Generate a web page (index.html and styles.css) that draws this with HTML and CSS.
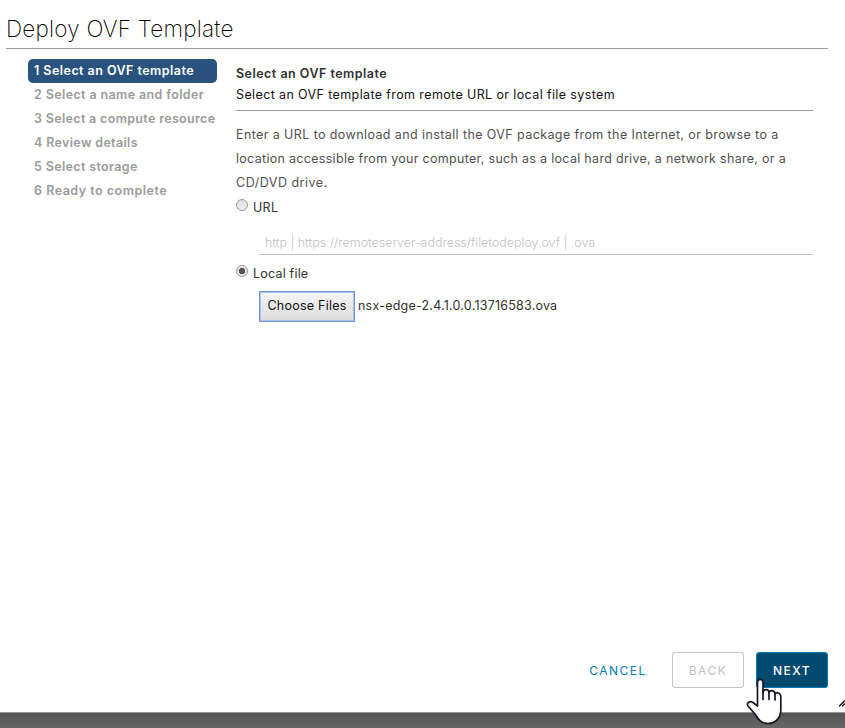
FILE: index.html
```html
<!DOCTYPE html>
<html lang="en">
<head>
<meta charset="utf-8">
<title>Deploy OVF Template</title>
<link rel="stylesheet" href="styles.css">
</head>
<body>
<div class="dialog">
  <header class="dialog-header"><h1 class="title"><span>Deploy OVF Template</span></h1></header>
  <div class="dialog-body">
    <ol class="steps">
      <li class="step active"><span class="s1">1 Select an OVF template</span></li>
      <li class="step"><span class="s2">2 Select a name and folder</span></li>
      <li class="step"><span class="s3">3 Select a compute resource</span></li>
      <li class="step"><span class="s4">4 Review details</span></li>
      <li class="step"><span class="s5">5 Select storage</span></li>
      <li class="step"><span class="s6">6 Ready to complete</span></li>
    </ol>
    <main class="page">
      <div class="page-header">
        <h2 class="page-title">Select an OVF template</h2>
        <p class="page-sub">Select an OVF template from remote URL or local file system</p>
      </div>
      <p class="intro"><span class="i1">Enter a URL to download and install the OVF package from the Internet, or browse to a</span><br><span class="i2">location accessible from your computer, such as a local hard drive, a network share, or a</span><br><span class="i3">CD/DVD drive.</span></p>
      <div class="option"><span class="radio"></span><span class="url-label">URL</span></div>
      <div class="url-field"><span>http | https://remoteserver-address/filetodeploy.ovf | .ova</span></div>
      <div class="option"><span class="radio checked"></span><span class="local-label">Local file</span></div>
      <div class="file-row"><button class="choose">Choose Files</button><span class="file-name">nsx-edge-2.4.1.0.0.13716583.ova</span></div>
    </main>
  </div>
  <footer class="actions">
    <button class="btn cancel">CANCEL</button>
    <button class="btn back">BACK</button>
    <button class="btn next">NEXT</button>
  </footer>
</div>
<div class="backdrop"></div>
<svg class="grip" width="6" height="8" viewBox="0 0 6 8" fill="none" stroke="#111" stroke-width="1.4"><path d="M0 7.500 6 1.500M3 7.500 6 4.500"/></svg>
<svg class="cursor" width="36" height="48" viewBox="0 0 36 48"><path d="M10.500 28V4.500C10.500 0.300 16 0.300 16 4.500V14C17 10.500 22 11 22 14.500C23.500 11.500 28 12.500 28 16C30 13.500 33.800 15 33.800 18.500V32C33.800 39 29 45.500 21 45.500C14 45.500 11 41 8 36L1 28C-1 24.500 3 22.500 6 24.500Z" fill="#fff" stroke="#15152a" stroke-width="1.700" stroke-linejoin="round"/><path d="M16 13V21.500M22 14.500V21.500M28 16V22" fill="none" stroke="#15152a" stroke-width="1.700" stroke-linecap="round"/></svg>
</body>
</html>
```

FILE: styles.css
```css
* { box-sizing: border-box; }
body {
  margin: 0;
  width: 845px;
  height: 728px;
  overflow: hidden;
  background: #fff;
  color: #313131;
  font: 400 12.5px/24px Inter, "Liberation Sans", sans-serif;
  white-space: nowrap;
}
h1, h2, p, ol { margin: 0; padding: 0; }
button { font: inherit; padding: 0; }
.dialog { display: flex; flex-direction: column; height: 712px; padding: 0 17px 24px 6px; }
.dialog-header { height: 49px; padding-top: 14px; border-bottom: 1px solid #9a9a9a; }
.title { font-size: 22.5px; line-height: 30px; font-weight: 200; letter-spacing: .22px; color: #000; }
.dialog-body { display: flex; flex: 1; padding: 10px 15px 0 22px; }
.steps { list-style: none; width: 189px; margin-right: 19px; }
.step { height: 24px; padding-left: 6px; line-height: 23px; color: #9a9a9a; font-weight: 600; }
.step.active { background: #29527f; color: #fff; border-radius: 5px; }
.s1 { letter-spacing: .46px; }
.s2 { letter-spacing: .38px; }
.s3 { letter-spacing: .33px; }
.s4, .s5 { letter-spacing: .35px; }
.s6 { letter-spacing: .5px; }
.page { flex: 1; }
.page-header { height: 52px; padding-top: 4px; border-bottom: 1px solid #9a9a9a; }
.page-title { font-size: 12.5px; line-height: 21px; font-weight: 600; letter-spacing: .48px; }
.page-sub { line-height: 21px; letter-spacing: .38px; color: #111; }
.intro { margin-top: 12px; color: #505050; }
.i1 { letter-spacing: .4px; }
.i2 { letter-spacing: .3px; }
.i3 { letter-spacing: .5px; }
.option { display: flex; height: 24px; padding-top: 1px; }
.url-label { letter-spacing: .3px; }
.local-label { letter-spacing: .2px; }
.radio { width: 12px; height: 12px; margin: 3px 5px 0 0; border: 1px solid #999; border-radius: 50%; background: linear-gradient(#ddd, #eee); }
.radio.checked { background: radial-gradient(circle, #555 0 3px, #e6e6e6 3.5px); }
.url-field { height: 36px; margin: 0 0 6px 23px; padding: 12px 0 0 6px; border-bottom: 1px solid #c1c1c1; color: #c1c1c1; font-weight: 300; letter-spacing: -.03px; }
.file-row { display: flex; align-items: flex-start; margin: 6px 0 0 23px; }
.choose { width: 96px; height: 31px; margin-right: 3px; padding-bottom: 2px; border: 1px solid #7197d6; box-shadow: inset 0 0 0 1px #a9bfe2; background: linear-gradient(#f5f5f5, #dcdcdc); color: #111; letter-spacing: .25px; }
.file-name { line-height: 29px; letter-spacing: .22px; }
.actions { display: flex; justify-content: flex-end; height: 36px; }
.btn { height: 36px; width: 72px; padding-top: 2px; border: 1px solid #c4c4c4; border-radius: 3px; background: #fff; font-size: 12px; letter-spacing: 1.5px; }
.cancel { width: 80px; margin-right: 14px; border-color: transparent; color: #0079b8; }
.back { margin-right: 12px; color: #c1c1c1; }
.next { background: #004a70; border-color: #0079b8; color: #fff; font-weight: 500; }
.backdrop { height: 16px; border-top: 1px solid #999; background: linear-gradient(#555, #666); }
.grip { position: absolute; left: 839px; top: 699px; }
.cursor { position: absolute; left: 747px; top: 678px; overflow: visible; }
```
